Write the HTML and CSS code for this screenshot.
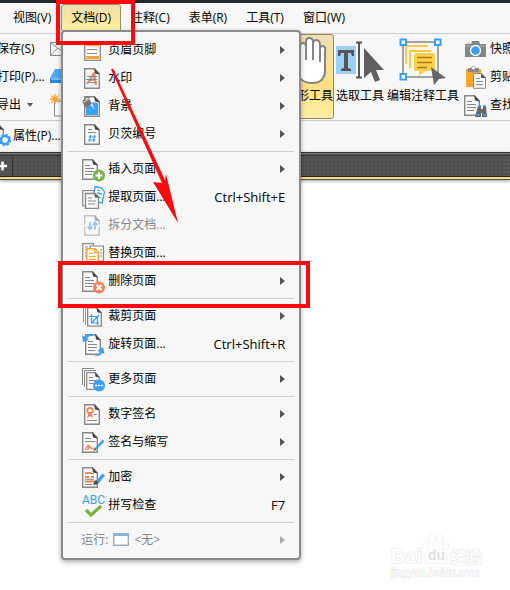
FILE: index.html
```html
<!DOCTYPE html>
<html lang="zh-CN">
<head>
<meta charset="utf-8">
<title>PDF 编辑器</title>
<link rel="stylesheet" href="styles.css">
</head>
<body>
<svg class="defs" aria-hidden="true">
  <symbol id="page" viewBox="0 0 16 21" overflow="visible">
    <path d="M.7.7H10.500L15.300 6V20.300H.7Z" fill="#fafafa" stroke="#888" stroke-width="1.400"/>
    <path d="M10 0 16 6.500 11 5.500Z" fill="#444"/>
  </symbol>
  <symbol id="lines" viewBox="0 0 10 11" overflow="visible">
    <path d="M0 .5H5M0 3.500H9M0 6.500H9M0 9.500H7" stroke="#858585" stroke-width="1.200" fill="none"/>
  </symbol>
</svg>

<header class="app">
  <nav class="menubar">
    <button class="top">视图(V)</button>
    <div class="open">
      <button class="top active" aria-expanded="true">文档(D)</button>
      <div class="menu" role="menu">
        <button class="item" role="menuitem">
          <svg class="ico" viewBox="0 0 24 24"><path d="M2.700 3.700H18.300V22.300H2.700Z" fill="#fafafa" stroke="#888" stroke-width="1.300"/><path d="M4 5H17V8H4ZM4 18H17V21H4Z" fill="#fda62b"/><path d="M5 11.500H15M5 15.500H15" stroke="#888" stroke-width="1.200"/></svg>
          <span>页眉页脚</span><i class="arrow"></i></button>
        <button class="item" role="menuitem">
          <svg class="ico" viewBox="0 0 24 24"><use href="#page" x="2" y="2" width="16" height="21"/><path d="M5 18 12 7 14 19M7 14.500 14 13" stroke="#f48466" stroke-width="2" fill="none"/><path d="M5 10.500H15M4 13.500H15M5 16.500H15" stroke="#888"/></svg>
          <span>水印</span><i class="arrow"></i></button>
        <button class="item" role="menuitem">
          <svg class="ico" viewBox="0 0 24 24"><use href="#page" x="2" y="2" width="16" height="21"/><path d="M4 12Q9 9 11 14 13 17 11 12L10 8 16 9V21H4Z" fill="#3da1f6"/><path d="M0 8 7 4 10 10 4 14Z" fill="#777"/><path d="M1 7Q4 2 8 3" stroke="#666" fill="none"/><path d="M1 9 7 5" stroke="#ccc"/></svg>
          <span>背景</span><i class="arrow"></i></button>
        <button class="item" role="menuitem">
          <svg class="ico" viewBox="0 0 24 24"><use href="#page" x="2" y="2" width="16" height="21"/><path d="M6 7.500H10M6 10.500H14" stroke="#888"/><path d="M8.500 13 7.500 20M12.500 13 11.500 20M6.500 15H14M6 18H13.500" stroke="#3ba0f5" stroke-width="1.200"/></svg>
          <span>贝茨编号</span><i class="arrow"></i></button>
        <hr>
        <button class="item" role="menuitem">
          <svg class="ico" viewBox="0 0 24 24"><use href="#page" x="0" y="2" width="16" height="21"/><use href="#lines" x="3" y="8" width="10" height="11"/><circle cx="17" cy="18.500" r="6" fill="#79b341"/><path d="M13.500 18.500H20.500M17 15V22" stroke="#fff" stroke-width="2.200"/></svg>
          <span>插入页面</span><i class="arrow"></i></button>
        <button class="item" role="menuitem">
          <svg class="ico" viewBox="0 0 24 24"><path d="M13 1.500 20 3 22.500 7 20 18 11 16Z" fill="#fff" stroke="#3ba0f5" stroke-width="1.300"/><path d="M15 5 18 6M15 8 20 9M16 12 19 13" stroke="#3ba0f5" stroke-width="1.300"/><path d="M.7 5.500H12V21H.7Z" fill="#fafafa" stroke="#888" stroke-width="1.200"/><path d="M3.500 8.500H13L16.500 12V23.300H3.500Z" fill="#fafafa" stroke="#888" stroke-width="1.300"/><path d="M12.500 8 17 12.500H13Z" fill="#555"/><path d="M6 13H10M6 16H14M6 19H13" stroke="#888"/></svg>
          <span>提取页面...</span><kbd>Ctrl+Shift+E</kbd></button>
        <button class="item" role="menuitem" disabled>
          <svg class="ico" viewBox="0 0 24 24"><use href="#page" x="2" y="2" width="16" height="21"/><path d="M0 12.500H20" stroke="#f7f7f7" stroke-width="2"/><path d="M8 9V16M5.500 13.500 8 16.500 10.500 13.500M13 17V9M10.500 12 13 9 15.500 12" stroke="#278ff0" stroke-width="1.700" fill="none"/></svg>
          <span>拆分文档...</span></button>
        <button class="item" role="menuitem">
          <svg class="ico" viewBox="0 0 24 24"><path d="M.7 2.700H11.500V21H.7Z" fill="#fafafa" stroke="#888" stroke-width="1.200"/><path d="M8 5H21.500V20H8Z" fill="#fafafa" stroke="#888" stroke-width="1.200"/><path d="M3 6H6M3 9H6M3 12H6M3 15H6M18 9H20M18 12H20M18 15H20" stroke="#888"/><path d="M4.700 7.700H13L16.300 11V23H4.700Z" fill="#fffaf0" stroke="#fda62b" stroke-width="1.400"/><path d="M12.500 7V11.500H17M7 12.500H11M7 15.500H14M7 18.500H14" stroke="#fda62b" stroke-width="1.200" fill="none"/></svg>
          <span>替换页面...</span></button>
        <button class="item" role="menuitem">
          <svg class="ico" viewBox="0 0 24 24"><use href="#page" x="0" y="2" width="16" height="21"/><use href="#lines" x="3" y="8" width="10" height="11"/><circle cx="17" cy="18.500" r="6" fill="#f6815b"/><path d="M14.500 16 19.500 21M19.500 16 14.500 21" stroke="#fff" stroke-width="2"/></svg>
          <span>删除页面</span><i class="arrow"></i></button>
        <hr>
        <button class="item" role="menuitem">
          <svg class="ico" viewBox="0 0 24 24"><path d="M1.500 18V1.500H12M3.500 21V3.500H14" stroke="#999" fill="none"/><use href="#page" x="5" y="3" width="15" height="20"/><path d="M9.500 10V19H17M7 12.500H15.500V21M9.500 19 17 11" stroke="#3ba0f5" stroke-width="1.200" fill="none"/></svg>
          <span>裁剪页面</span><i class="arrow"></i></button>
        <button class="item" role="menuitem">
          <svg class="ico" viewBox="0 0 24 24"><use href="#page" x="3" y="2" width="16" height="21"/><use href="#lines" x="6" y="9" width="10" height="11"/><path d="M11 2Q6 1 3 5L0 3 1 10 7 8 5 6Q7 3.500 11 4ZM12 24Q17 23 18 20L15.500 19 21 15 22.500 22 20 21Q17 25 12 24Z" fill="#3ba0f5"/></svg>
          <span>旋转页面...</span><kbd>Ctrl+Shift+R</kbd></button>
        <hr>
        <button class="item" role="menuitem">
          <svg class="ico" viewBox="0 0 24 24"><path d="M.5 18V1.500H12M2.500 20V3.500H14" stroke="#888" fill="none"/><use href="#page" x="4" y="5" width="14" height="18"/><path d="M7 10.500H11M7 13.500H14M7 16.500H14" stroke="#888"/><circle cx="17" cy="18.500" r="6" fill="#3ba0f5"/><path d="M13 18.500H15M16 18.500H18M19 18.500H21" stroke="#fff" stroke-width="1.500"/></svg>
          <span>更多页面</span><i class="arrow"></i></button>
        <hr>
        <button class="item" role="menuitem">
          <svg class="ico" viewBox="0 0 24 24"><use href="#page" x="2" y="2" width="16" height="21"/><circle cx="8" cy="8.500" r="2.700" fill="#fff" stroke="#f6815b" stroke-width="1.800"/><path d="M6.500 11 5 16 8 14 11 16 9.500 11Z" fill="#f6815b"/><path d="M12 12.500H15M5 18.500H15" stroke="#888"/></svg>
          <span>数字签名</span><i class="arrow"></i></button>
        <button class="item" role="menuitem">
          <svg class="ico" viewBox="0 0 24 24"><use href="#page" x="0" y="2" width="16" height="21"/><path d="M3 8.500H9M3 11.500H13" stroke="#888"/><path d="M3 20Q7 13 7 16L5.500 20Q9 15 9 18 9 20 12 18L14 19" stroke="#f6815b" stroke-width="1.200" fill="none"/><path d="M13 18 20.500 9.500 22.500 11.500 14.500 19.500Z" fill="#3ba0f5"/><path d="M11 21.500 13 18 14.500 19.500Z" fill="#555"/></svg>
          <span>签名与缩写</span><i class="arrow"></i></button>
        <hr>
        <button class="item" role="menuitem">
          <svg class="ico" viewBox="0 0 24 24"><use href="#page" x="0" y="2" width="16" height="21"/><path d="M3 8H9M3 16.500H13" stroke="#f6815b" stroke-width="2.200"/><path d="M9 12H12M3 12H7" stroke="#f6815b" stroke-width="2.200"/><path d="M9 8.500H12M3 14.300H12M3 19.500H10" stroke="#888"/><path d="M14 16 20.500 8.500 23 10.500 17 18Z" fill="#3ba0f5"/><path d="M11 20Q12 16 14 15L17 18Q15 20 11 20Z" fill="#555"/></svg>
          <span>加密</span><i class="arrow"></i></button>
        <button class="item" role="menuitem">
          <svg class="ico" viewBox="0 0 24 24"><text class="abc" x="0" y="11">ABC</text><path d="M4 17 9 22 19 13" stroke="#79b341" stroke-width="3.200" fill="none"/></svg>
          <span>拼写检查</span><kbd>F7</kbd></button>
        <hr>
        <button class="item run" role="menuitem" disabled>
          <span>运行:</span>
          <svg class="win" viewBox="0 0 16 14"><path d="M.7.7H15.300V12.300H.7Z" fill="#fff" stroke="#a0abb8" stroke-width="1.400"/><path d="M0 0H16V3H0Z" fill="#84b4e0"/></svg>
          <span>&lt;无&gt;</span><i class="arrow"></i></button>
      </div>
    </div>
    <button class="top">注释(C)</button>
    <button class="top">表单(R)</button>
    <button class="top">工具(T)</button>
    <button class="top">窗口(W)</button>
  </nav>

  <div class="toolbar">
    <div class="stack file">
      <button>保存(S)</button>
      <button>打印(P)...</button>
      <button>导出<i class="drop"></i></button>
    </div>
    <div class="stack create">
      <svg class="ico" viewBox="0 0 24 24"><path d="M.5 5.500H23V18.500H.5ZM.5 6 12 14 23 6M.5 18 8 11" fill="#fafafa" stroke="#888"/></svg>
      <svg class="ico" viewBox="0 0 24 24"><path d="M5 4H23V13H0Z" fill="#4da8f5"/><path d="M0 13H23V18H0Z" fill="#2489e0"/><path d="M1 14H20" stroke="#cce7ff"/></svg>
      <svg class="ico" viewBox="0 0 24 24"><path d="M4.500 8H20V23H4.500Z" fill="#fafafa" stroke="#888"/><path d="M5 1V11M0 6H10M1.500 2.500 8.500 9.500M8.500 2.500 1.500 9.500" stroke="#fda62b" stroke-width="1.300"/></svg>
    </div>
    <div class="tools">
      <button class="tool selected">
        <svg viewBox="0 0 48 48"><path d="M15 41Q7 31 4 27 3 23 8 25L15 31V10Q15 6 18 6 21 6 21 10V5Q21 1 24 1 28 1 28 5V8Q28 3 31 3 35 3 35 8V12Q35 9 38 9 41 10 40 14V35Q39 46 27 46 19 46 15 41Z" fill="#fff" stroke="#858585" stroke-width="2"/><path d="M21 9V23M28 7V23M35 11V25" stroke="#858585" stroke-width="2"/></svg>
        <span>手形工具</span></button>
      <button class="tool">
        <svg viewBox="0 0 48 48"><path d="M0 9H20V37H0Z" fill="#9bcffc"/><path d="M2 13H18V19H16L15 16H12V31L15 32V34H5V32L8 31V16H5L4 19H2Z" fill="#555"/><path d="M20 5.500H26M23 5.500V40.500M20 40.500H26" stroke="#555" stroke-width="2"/><path d="M28 11 48 33 40 33 44 43 39 45 35 35 28 41Z" fill="#606060"/></svg>
        <span>选取工具</span></button>
      <button class="tool">
        <svg viewBox="0 0 48 48"><path d="M4 5H39V40H4Z" fill="none" stroke="#888" stroke-width="1.500"/><path d="M7 27V9H29M11 31V14H32" stroke="#ffca42" stroke-width="2" fill="none"/><path d="M17 16H34Q36 16 36 18V34H26L20 39V34H15V18Z" fill="#ffd04d"/><path d="M18 20.500H33M18 25.500H33M18 30.500H28" stroke="#a77b10" stroke-width="1.500"/><path d="M1.500 2.500H7V8H1.500ZM36 2.500H41.500V8H36ZM1.500 37H7V42.500H1.500Z" fill="#fff" stroke="#3ba0f5" stroke-width="2"/><path d="M32 30 47 41 40 42 35 48Z" fill="#666"/></svg>
        <span>编辑注释工具</span></button>
    </div>
    <div class="stack extras">
      <button><svg class="ico" viewBox="0 0 24 24"><path d="M1 7H7L8 4H15L16 7H22V20H1Z" fill="#858585"/><path d="M1 9H22M3 6H6" stroke="#b3b3b3"/><circle cx="11.500" cy="13.500" r="5" fill="#3ba0f5" stroke="#fff" stroke-width="1.300"/></svg>快照</button>
      <button><svg class="ico" viewBox="0 0 24 24"><path d="M2 4H17V22H2Z" fill="#fda62b"/><path d="M4 7V3H7Q9-1 12 3H15V7Z" fill="#888"/><circle cx="9.500" cy="3" r="1.500" fill="#fff"/><path d="M9.500 8.500H17L21.500 13V23.300H9.500Z" fill="#fafafa" stroke="#888"/><path d="M17 8V13H22Z" fill="#555"/><path d="M12 13.500H16M12 16.500H19M12 19.500H19" stroke="#888"/></svg>剪贴板</button>
      <button><svg class="ico" viewBox="0 0 24 24"><use href="#page" x="0" y="2" width="16" height="21"/><use href="#lines" x="3" y="8" width="10" height="11"/><path d="M14 13H17V16H19V13H22L23 24H18V20H17V24H11Z" fill="#666"/><path d="M12 22H16M19 22H23M14 13H17M19 13H22" stroke="#3ba0f5" stroke-width="1.500"/></svg>查找</button>
    </div>
  </div>

  <div class="props">
    <button><svg class="ico" viewBox="0 0 24 24"><use href="#page" x="2" y="0" width="15" height="20"/><circle cx="18" cy="16" r="4" fill="#fafafa" stroke="#3ba0f5" stroke-width="2.500"/><circle cx="18" cy="16" r="5.500" fill="none" stroke="#3ba0f5" stroke-width="1.500" stroke-dasharray="2.200 2.100"/></svg>属性(P)...</button>
  </div>
  <div class="tabs"><button aria-label="新建标签"><svg viewBox="0 0 12 12"><path d="M2 6H11M6.500 1.500V10.500" stroke="#fff" stroke-width="2.500"/></svg></button></div>
</header>

<main></main>

<svg class="marks" width="320" height="320" viewBox="0 0 320 320" aria-hidden="true">
  <path d="M58 2H133V43H58Z M60 263H308V306H60Z" fill="none" stroke="#fb0b0e" stroke-width="4"/>
  <path d="M111 69.500 113 68.500 165 180 166 174 178 223 153 182 162 183Z" fill="#f90c0c"/>
</svg>

<div class="brand">
  <div class="logo"><span>Bai</span>
    <svg viewBox="0 0 28 32"><path d="M13.500 13Q18 13 20 17 26 21 25 26 24 31 18 30H8Q2 31 2 26 2 21 7 17 10 13 13.500 13Z"/><ellipse cx="4" cy="12" rx="3" ry="4"/><ellipse cx="10" cy="5.500" rx="3" ry="4.500"/><ellipse cx="17.500" cy="5.500" rx="3" ry="4.500"/><ellipse cx="23.500" cy="12.500" rx="3" ry="4"/><text x="6" y="27">du</text></svg>
    <span class="cn">经验</span></div>
  <div class="url">jingyan.baidu.com</div>
</div>
</body>
</html>
```

FILE: styles.css
```css
* { box-sizing: border-box; }
body {
  margin: 0;
  min-height: 100vh;
  position: relative;
  overflow: hidden;
  background: #fff;
  color: #000;
  font: 12px/18px "Open Sans", "Noto Sans CJK SC", sans-serif;
}
button {
  margin: 0;
  padding: 0;
  border: 0;
  background: none;
  color: inherit;
  font: inherit;
  white-space: nowrap;
}
svg { flex: none; overflow: visible; }
.defs { position: absolute; width: 0; height: 0; }
.ico { width: 24px; height: 24px; }

.app { background: #f7f7f7; border-top: 3px solid #23272e; }

.menubar {
  display: flex;
  gap: 1px;
  height: 31px;
  padding-left: 4px;
  border-bottom: 1px solid #ccc;
}
.top {
  height: 28px;
  padding: 0 9px;
  margin-top: 1px;
}
.open { position: relative; }
.active {
  border: 1px solid #9c8c5c;
  border-radius: 3px;
  background: linear-gradient(#ecdfb4, #f8e79a 55%, #fff3a6);
}

.menu {
  position: absolute;
  z-index: 2;
  left: 0;
  top: 27px;
  width: 240px;
  padding: 4px 0;
  background: #f7f7f7;
  border: 2px solid #8a8a8a;
  border-radius: 4px;
  box-shadow: 0 2px 5px #0005;
}
.item {
  display: flex;
  align-items: center;
  width: 100%;
  height: 28px;
  padding: 0 14px 0 19px;
  text-align: left;
}
.item .ico { margin-right: 2px; }
.item:disabled { color: #858585; }
.item:disabled .ico { opacity: .45; }
.item kbd { margin-left: auto; font: inherit; font-size: 13px; }
.arrow {
  margin-left: auto;
  border: 4px solid transparent;
  border-left: 5px solid #555;
  border-right: 0;
}
.item:disabled .arrow { border-left-color: #aaa; }
.run { padding-left: 18px; }
.win { width: 16px; height: 14px; margin: 0 5px; }
.menu hr {
  margin: 3px 5px;
  border: 0;
  border-top: 1px solid #d0d0d0;
}
.abc { font: 12px Roboto, sans-serif; fill: #3ba0f5; }

.toolbar {
  display: flex;
  height: 87px;
  overflow: hidden;
  border-bottom: 1px solid #ccc;
}
.stack { display: flex; flex: none; flex-direction: column; padding-top: 1px; }
.stack > * { height: 28px; display: flex; align-items: center; }
.file { width: 50px; align-items: flex-start; }
.file button { margin-left: -3px; }
.drop {
  margin-left: 6px;
  border: 3px solid transparent;
  border-top: 4px solid #555;
  border-bottom: 0;
}
.create { width: 234px; }
.create .ico { margin: 2px 0; height: 24px; }
.tools { display: flex; flex: none; gap: 1px; }
.tool {
  display: flex;
  flex-direction: column;
  align-items: center;
  height: 85px;
  padding-top: 2px;
  border: 1px solid transparent;
  border-radius: 3px;
}
.tool svg { width: 48px; height: 48px; margin-bottom: 2px; }
.selected {
  border-color: #9c8350;
  background: linear-gradient(#eee0b7, #ffdf82 60%, #fff0a5);
}
.extras { margin-left: 4px; }
.extras .ico { margin-right: 2px; }

.props { height: 31px; }
.props button { display: flex; align-items: center; height: 30px; margin-left: -13px; }
.props .ico { margin-right: 2px; }

.tabs {
  height: 28px;
  padding-top: 4px;
  background:
    linear-gradient(#333 0 1px, #777 1px 2px, #555 2px 3px, #333 3px 4px, #0000 4px 24px, #222 24px 25px, #f9dd86 25px 27px, #555 27px),
    radial-gradient(#0002 1px, #0000 1px) 0 0 / 4px 4px,
    #555;
  box-shadow: 0 1px 3px #0006;
}
.tabs button {
  display: flex;
  align-items: center;
  width: 13px;
  height: 20px;
  border-right: 1px solid #333;
}
.tabs svg { width: 12px; height: 12px; margin-left: -4px; }

.marks { position: absolute; z-index: 3; left: 0; top: 0; pointer-events: none; }

.brand {
  position: absolute;
  right: 28px;
  bottom: 11px;
  color: #fff;
  -webkit-text-stroke: 1px #e4e4e4;
  paint-order: stroke fill;
}
.logo {
  display: flex;
  align-items: flex-end;
  height: 32px;
  font: bold 20px/18px "Liberation Sans", sans-serif;
}
.logo svg { width: 28px; height: 32px; fill: #fff; stroke: #e4e4e4; }
.logo text { font-size: 14px; stroke: none; fill: #e0e0e0; -webkit-text-stroke: 0; }
.logo .cn { font: bold 16px/18px "Noto Sans CJK SC", sans-serif; }
.url { font: 11px/14px "Liberation Sans", sans-serif; }
```
